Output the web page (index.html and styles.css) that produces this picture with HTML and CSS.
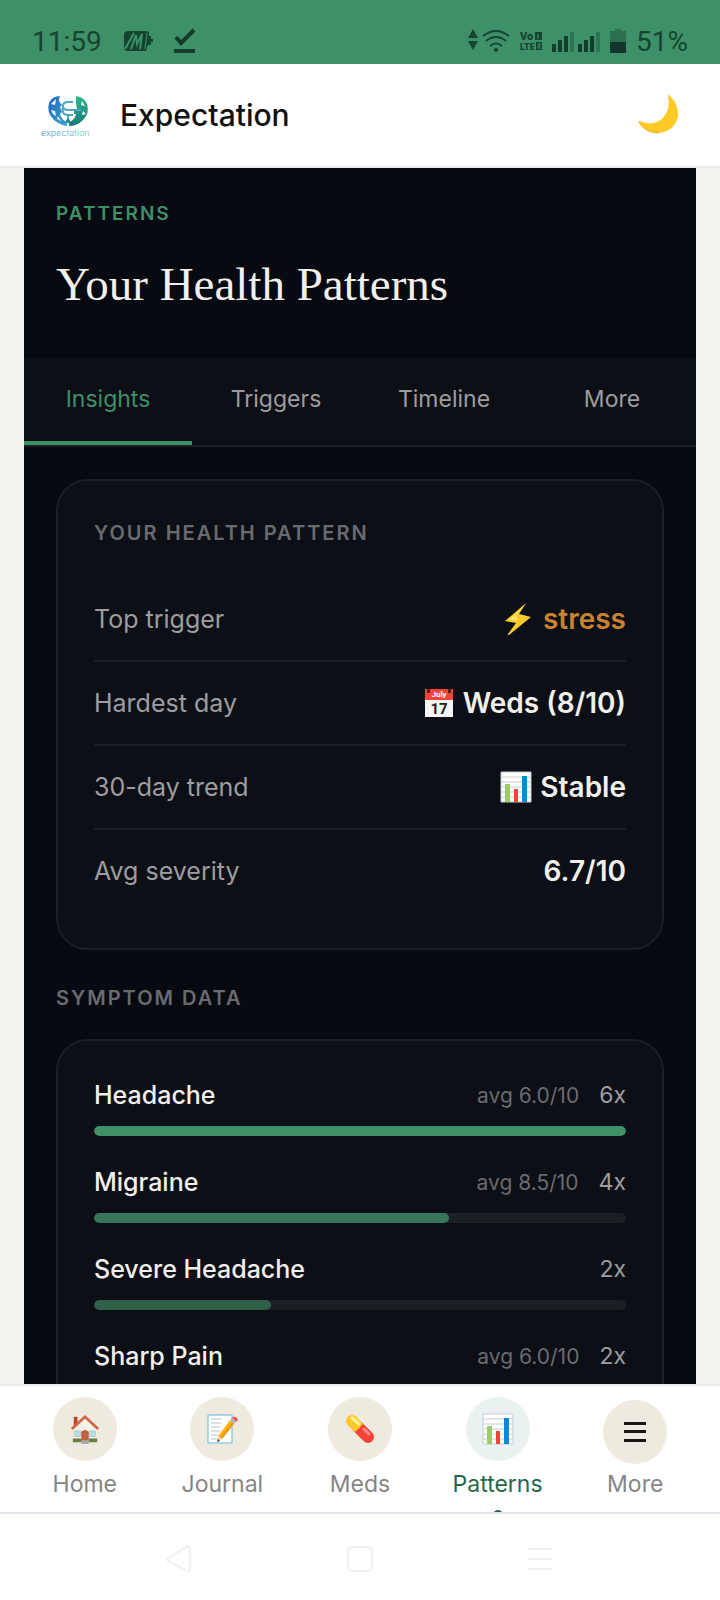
FILE: index.html
```html
<!DOCTYPE html>
<html lang="en">
  <head>
    <meta charset="UTF-8" />
    <meta name="viewport" content="width=device-width, initial-scale=1" />
    <title>Expectation - Patterns</title>
    <link rel="stylesheet" href="styles.css">
  </head>
  <body>
    <!-- shared emoji shapes -->
    <svg class="defs" aria-hidden="true">
      <symbol id="chart" viewBox="0 0 32 32">
        <path fill="#fff" stroke="#c4ccd0" d="M1 1h30v30H1z" />
        <path fill="none" stroke="#c4ccd0" d="M1 6h30M1 11h30M1 16h30M1 21h30M1 26h30" />
        <path fill="#9ccc65" d="M5 13h5v18H5z" />
        <path fill="#f44336" d="M14 18h4v13h-4z" />
        <path fill="#0f87d8" d="M22 5h5v26h-5z" />
      </symbol>
    </svg>

    <div class="status">
      <span class="clock">11:59</span>
      <svg width="32" height="24" viewBox="0 0 32 24">
        <path fill="#16452f" d="M2 4l3-2h19l3 1v4h2v3h2v3h-2v3h-3l-2 6H4l-2-2z" />
        <path fill="none" stroke="#3e9068" stroke-width="2" d="M3 20L12 4M9 20L14 6l1 9 5-10-2 15" />
        <path fill="none" stroke="#3e9068" d="M25 4l-2 16" />
      </svg>
      <svg class="check" width="22" height="26" viewBox="0 0 22 26">
        <path fill="none" stroke="#123d28" stroke-width="4" d="M2 9l5 6L20 2" />
        <path fill="#123d28" d="M0 21h21v4H0z" />
      </svg>
      <div class="status-right">
        <svg width="42" height="26" viewBox="0 0 42 26">
          <path fill="#16452f" d="M5 1l5 9H0zM0 13h10l-5 9z" />
          <g fill="none" stroke="#16452f" stroke-width="2">
            <path d="M15 8q13-10 26 0M18 13q10-8 20 0M22 18q6-5 12 0" />
          </g>
          <circle cx="28" cy="22" r="2" fill="#16452f" />
        </svg>
        <svg width="22" height="20" viewBox="0 0 22 20">
          <g fill="#16452f" font-family="Roboto, sans-serif" font-weight="900">
            <text x="0" y="9" font-size="11">Vo</text>
            <text x="0" y="19" font-size="9">LTE</text>
          </g>
          <path fill="#16452f" d="M15 1h7v8h-7zM16 11h6v8h-6z" />
          <path fill="none" stroke="#3e9068" d="M18 3v5M18 13h2v2h-2v2h3" />
        </svg>
        <svg width="48" height="21" viewBox="0 0 48 21">
          <path fill="#123d28" d="M0 13h4v8H0zM6 9h4v12H6zM12 5h4v16h-4zM26 13h4v8h-4zM32 9h4v12h-4zM38 5h4v16h-4z" />
          <path fill="#2f7553" d="M18 1h4v20h-4zM44 1h4v20h-4z" />
        </svg>
        <svg class="battery" width="16" height="24" viewBox="0 0 16 24">
          <path fill="#2c6f4e" d="M5 0h6v2h5v11H0V2h5z" />
          <path fill="#12372a" d="M0 13h16v11H0z" />
        </svg>
        <span>51%</span>
      </div>
    </div>

    <header class="header">
      <a class="brand" href="#">
        <svg width="56" height="46" viewBox="0 0 56 46">
          <defs>
            <linearGradient id="brand" x1="0" x2="1">
              <stop offset="0" stop-color="#3f86c8" />
              <stop offset="0.5" stop-color="#62bcd4" />
              <stop offset="1" stop-color="#5cc4a4" />
            </linearGradient>
            <linearGradient id="left" x1="0" x2="1" y1="0" y2="1">
              <stop offset="0" stop-color="#2468c4" />
              <stop offset="1" stop-color="#35a5cf" />
            </linearGradient>
            <linearGradient id="right" x1="0" x2="0" y1="0" y2="1">
              <stop offset="0" stop-color="#2fb98a" />
              <stop offset="1" stop-color="#16787b" />
            </linearGradient>
          </defs>
          <path fill="url(#left)" d="M20 4q-8 0-11 7-3 9 5 17 6 5 13 6v-4q-6-3-7-8l2-2-2-5 2-2-3-4q0-3 1-5z" />
          <path fill="url(#right)" d="M36 4q8 1 11 8 3 9-4 16-6 6-14 6v-4q6-2 7-8h-2v-5h3l-1-6z" />
          <path fill="#fff" d="M11 12l5-5-1 6zM11 18l4 1 1 5-3-2zM42 9l3 5-4-1zM43 19l3 3-4 1zM18 24l3 5-4-2z" />
          <path fill="none" stroke="#4ba6c6" stroke-width="2" d="M33 10h-5q-5 0-5 4t5 4h13M23 14q-2 9 5 9h5M28 24v4" />
          <circle cx="28" cy="29" r="2" fill="#2d7f8d" />
          <text x="1" y="44" font-family="Inter, sans-serif" font-size="9" font-weight="300" letter-spacing="0" fill="url(#brand)">expectation</text>
        </svg>
        <span>Expectation</span>
      </a>
      <button class="theme" type="button" aria-label="Dark mode">
        <svg width="42" height="42" viewBox="0 0 42 42">
          <path fill="#ffc928" d="M31 1q10 9 9 21-3 15-19 17Q7 39 1 29q-1-2 1-2 13 6 23-3 8-9 5-22 0-2 1-1z" />
          <path fill="none" stroke="#f0ad20" d="M1 28q6 11 20 11" />
        </svg>
      </button>
    </header>

    <main class="main">
      <div class="content">
        <section class="hero">
          <p class="eyebrow">PATTERNS</p>
          <h1>Your Health Patterns</h1>
        </section>

        <div class="tabs">
          <button class="tab active" type="button">Insights</button>
          <button class="tab" type="button">Triggers</button>
          <button class="tab" type="button">Timeline</button>
          <button class="tab" type="button">More</button>
        </div>

        <div class="panel">
          <section class="card">
            <h2 class="label">YOUR HEALTH PATTERN</h2>
            <dl class="facts">
              <div class="fact">
                <dt>Top trigger</dt>
                <dd class="warn">
                  <svg width="32" height="32" viewBox="0 0 32 32">
                    <path fill="#ffc928" d="M23 0L2 18l11 2L5 31q-1 2 1 1l22-18-12-3z" />
                    <path fill="#ffe36b" d="M22 2L6 17l9 1-2-5z" />
                  </svg>
                  stress
                </dd>
              </div>
              <div class="fact">
                <dt>Hardest day</dt>
                <dd>
                  <svg width="32" height="32" viewBox="0 0 32 32">
                    <path fill="#f5f5f5" d="M2 2h28v28H2z" />
                    <path fill="#f44336" d="M2 2h28v11H2z" />
                    <path fill="#5d1712" d="M4 2h3v4H4zM25 2h3v4h-3z" />
                    <text x="16" y="10" text-anchor="middle" font-family="Roboto, sans-serif" font-size="8" font-weight="700" fill="#fff">July</text>
                    <text x="16" y="27" text-anchor="middle" font-family="Roboto, sans-serif" font-size="15" font-weight="700" fill="#212121">17</text>
                  </svg>
                  Weds (8/10)
                </dd>
              </div>
              <div class="fact">
                <dt>30-day trend</dt>
                <dd>
                  <svg width="32" height="32"><use href="#chart" /></svg>
                  Stable
                </dd>
              </div>
              <div class="fact">
                <dt>Avg severity</dt>
                <dd>6.7/10</dd>
              </div>
            </dl>
          </section>

          <h2 class="label">SYMPTOM DATA</h2>

          <section class="card">
            <div class="symptom">
              <div class="symptom-head">
                <span class="name">Headache</span>
                <span class="avg">avg 6.0/10</span>
                <span class="count">6x</span>
              </div>
              <div class="bar"><div class="fill" style="width: 100%"></div></div>
            </div>
            <div class="symptom">
              <div class="symptom-head">
                <span class="name">Migraine</span>
                <span class="avg">avg 8.5/10</span>
                <span class="count">4x</span>
              </div>
              <div class="bar"><div class="fill mid" style="width: 66.7%"></div></div>
            </div>
            <div class="symptom">
              <div class="symptom-head">
                <span class="name">Severe Headache</span>
                <span class="count">2x</span>
              </div>
              <div class="bar"><div class="fill low" style="width: 33.3%"></div></div>
            </div>
            <div class="symptom">
              <div class="symptom-head">
                <span class="name">Sharp Pain</span>
                <span class="avg">avg 6.0/10</span>
                <span class="count">2x</span>
              </div>
            </div>
          </section>
        </div>
      </div>
    </main>

    <nav class="nav">
      <a class="nav-item" href="#">
        <span class="nav-icon">
          <svg width="30" height="30" viewBox="0 0 32 32">
            <path fill="#b5492c" d="M4 3h4v10H4z" />
            <path fill="#f5f1e6" d="M4 15L16 4l12 11v14H4z" />
            <path fill="none" stroke="#cf6844" stroke-width="3" d="M2 16L16 3l14 13" />
            <path fill="#b9dfe6" stroke="#a5cdd4" d="M5 18h6v6H5zM21 18h6v6h-6z" />
            <path fill="#c2603f" d="M12 29V19q4-4 8 0v10z" />
            <path fill="#66803f" d="M3 26h9v4H3zM20 26h9v4h-9z" />
            <path fill="#a9a9a9" d="M12 28h8v4h-8z" />
          </svg>
        </span>
        Home
      </a>
      <a class="nav-item" href="#">
        <span class="nav-icon">
          <svg width="32" height="32" viewBox="0 0 32 32">
            <path fill="#fff" stroke="#64b5da" d="M2 2h24v28H2z" />
            <path fill="none" stroke="#b8c4c9" d="M5 6h11M5 10h10M5 14h9M5 18h9M5 22h7M5 26h8" />
            <path fill="#ffb71c" d="M24 7l4 4-12 15-4-3z" />
            <path fill="#f09a10" d="M26 9l2 2-12 15-2-2z" />
            <path fill="#f4d6a8" d="M12 23l4 3-5 3z" />
            <path fill="#444" d="M12 26l2 2-3 1z" />
            <path fill="#a8b8c0" d="M24 7l2-2 4 4-2 2z" />
            <path fill="#ee5c6c" d="M26 5q2-3 5 0 2 2-1 4z" />
          </svg>
        </span>
        Journal
      </a>
      <a class="nav-item" href="#">
        <span class="nav-icon">
          <svg width="32" height="32" viewBox="0 0 32 32">
            <g fill="none" stroke-linecap="round" stroke-width="12">
              <path stroke="#f44336" d="M14 14l10 10" />
              <path stroke="#ffca28" d="M8 8l3 3" />
            </g>
            <path fill="#ffca28" d="M6 14l8-8 5 5-8 8z" />
            <path fill="none" stroke="#fff59d" stroke-width="3" stroke-linecap="round" d="M8 5l7 6" />
            <path fill="none" stroke="#ff8a80" stroke-width="3" stroke-linecap="round" d="M20 16l5 5" />
          </svg>
        </span>
        Meds
      </a>
      <a class="nav-item active" href="#">
        <span class="nav-icon">
          <svg width="32" height="32"><use href="#chart" /></svg>
        </span>
        Patterns
        <span class="dot"></span>
      </a>
      <button class="nav-item nav-more" type="button">
        <span class="nav-icon">
          <svg width="22" height="22" viewBox="0 0 22 22">
            <path fill="#1b1612" d="M0 1h22v3H0zM0 9h22v3H0zM0 18h22v3H0z" />
          </svg>
        </span>
        More
      </button>
    </nav>

    <div class="system-nav">
      <svg width="28" height="28" viewBox="0 0 28 28">
        <path d="M21 2q3-1 3 2v20q0 3-3 2L2 16q-2-2 0-3z" />
      </svg>
      <svg width="28" height="28" viewBox="0 0 28 28">
        <rect x="2" y="2" width="24" height="24" rx="4" />
      </svg>
      <svg width="28" height="28" viewBox="0 0 28 28">
        <path d="M2 4h24M2 14h24M2 24h24" />
      </svg>
    </div>
  </body>
</html>
```

FILE: styles.css
```css
* {
  box-sizing: border-box;
}
body {
  display: flex;
  flex-direction: column;
  height: 100vh;
  margin: 0;
  overflow: hidden;
  font-family: Inter, sans-serif;
  background: #f5f3ee;
}
h1,
h2,
p,
dl,
dd {
  margin: 0;
}
svg {
  flex: none;
}
a {
  text-decoration: none;
}
button {
  padding: 0;
  border: none;
  background: none;
  font-family: inherit;
  cursor: pointer;
}
.defs {
  position: absolute;
  width: 0;
  height: 0;
}

/* phone status bar */
.status {
  display: flex;
  flex: none;
  align-items: center;
  gap: 20px;
  padding: 18px 32px 0;
  height: 64px;
  background: #3e9068;
  color: #16452f;
  font-family: Roboto, sans-serif;
  font-size: 28px;
}
.status-right {
  display: flex;
  align-items: center;
  gap: 10px;
  margin-left: auto;
}

/* app header */
.header {
  display: flex;
  flex: none;
  align-items: center;
  justify-content: space-between;
  height: 104px;
  padding: 0 40px;
  background: #fff;
  border-bottom: 2px solid #ebebea;
}
.brand {
  display: flex;
  align-items: center;
  gap: 24px;
  color: #111;
  font-size: 30px;
  font-weight: 500;
}
.theme {
  display: flex;
}

.main {
  flex: 1;
  min-height: 0;
  overflow: hidden;
  padding: 0 24px;
}
.content {
  min-height: 100%;
  background: #080a11;
  color: #f2f0ec;
}
.hero {
  padding: 32px 32px 42px;
}
.eyebrow {
  margin-bottom: 24px;
  color: #3e9068;
  font-size: 19px;
  font-weight: 600;
  line-height: 28px;
  letter-spacing: 2px;
}
h1 {
  font-family: "Liberation Serif", serif;
  font-size: 47px;
  font-weight: 400;
  line-height: 64px;
}

.tabs {
  display: grid;
  grid-template-columns: repeat(4, 1fr);
  background: #0d0f16;
  border-bottom: 2px solid #1c1e24;
}
.tab {
  padding: 24px 0;
  border-bottom: 4px solid transparent;
  color: #9d9d9f;
  font-size: 23px;
  line-height: 35px;
}
.tab.active {
  color: #3e9068;
  border-color: #3e9068;
}

.panel {
  padding: 32px;
}
.card {
  padding: 36px;
  background: #0d0f16;
  border: 2px solid #1c1e24;
  border-radius: 32px;
}
.label {
  color: #6a6b6f;
  font-size: 20px;
  font-weight: 600;
  line-height: 33px;
  letter-spacing: 2px;
}
.card .label {
  margin-bottom: 28px;
}
.panel > .label {
  margin: 32px 0 24px;
}
.fact {
  display: flex;
  align-items: center;
  justify-content: space-between;
  padding: 24px 0;
  border-bottom: 2px solid #1c1e24;
  line-height: 34px;
}
.fact:last-child {
  border-bottom: none;
}
.fact dt {
  color: #9d9d9f;
  font-size: 25px;
}
.fact dd {
  display: flex;
  align-items: center;
  gap: 8px;
  font-size: 28px;
  font-weight: 600;
}
.fact .warn {
  color: #c9822f;
}

.symptom {
  margin-bottom: 28px;
}
.symptom-head {
  display: flex;
  align-items: center;
  gap: 20px;
  margin-bottom: 12px;
  line-height: 37px;
}
.name {
  flex: 1;
  font-size: 25px;
  font-weight: 500;
}
.avg {
  color: #6a6b6f;
  font-size: 21px;
}
.count {
  color: #9d9d9f;
  font-size: 23px;
}
.bar {
  height: 10px;
  border-radius: 5px;
  background: #1c1f24;
  overflow: hidden;
}
.fill {
  height: 100%;
  border-radius: 5px;
  background: #3e9068;
}
.fill.mid {
  background: #38755a;
}
.fill.low {
  background: #30604a;
}

/* bottom navigation */
.nav {
  display: grid;
  flex: none;
  grid-template-columns: repeat(5, 1fr);
  height: 130px;
  padding: 11px 16px 0;
  background: #fff;
  border-top: 2px solid #ebebea;
  border-bottom: 2px solid #dfe5ea;
  overflow: hidden;
}
.nav-item {
  display: flex;
  flex-direction: column;
  align-items: center;
  gap: 6px;
  color: #858585;
  font-size: 23px;
  line-height: 34px;
}
.nav-item.active {
  color: #276749;
}
.nav-more {
  gap: 3px;
  padding-top: 3px;
}
.nav-icon {
  display: flex;
  align-items: center;
  justify-content: center;
  width: 64px;
  height: 64px;
  border-radius: 50%;
  background: #efeae0;
}
.active .nav-icon {
  background: #e9f2f0;
}
.dot {
  flex: none;
  width: 10px;
  height: 10px;
  margin-top: 3px;
  border-radius: 50%;
  background: #276749;
}

.system-nav {
  display: flex;
  flex: none;
  align-items: center;
  justify-content: center;
  gap: 152px;
  height: 86px;
  padding-top: 3px;
  background: #fff;
}
.system-nav svg {
  fill: none;
  stroke: #f0f0f0;
  stroke-width: 2;
}
```
